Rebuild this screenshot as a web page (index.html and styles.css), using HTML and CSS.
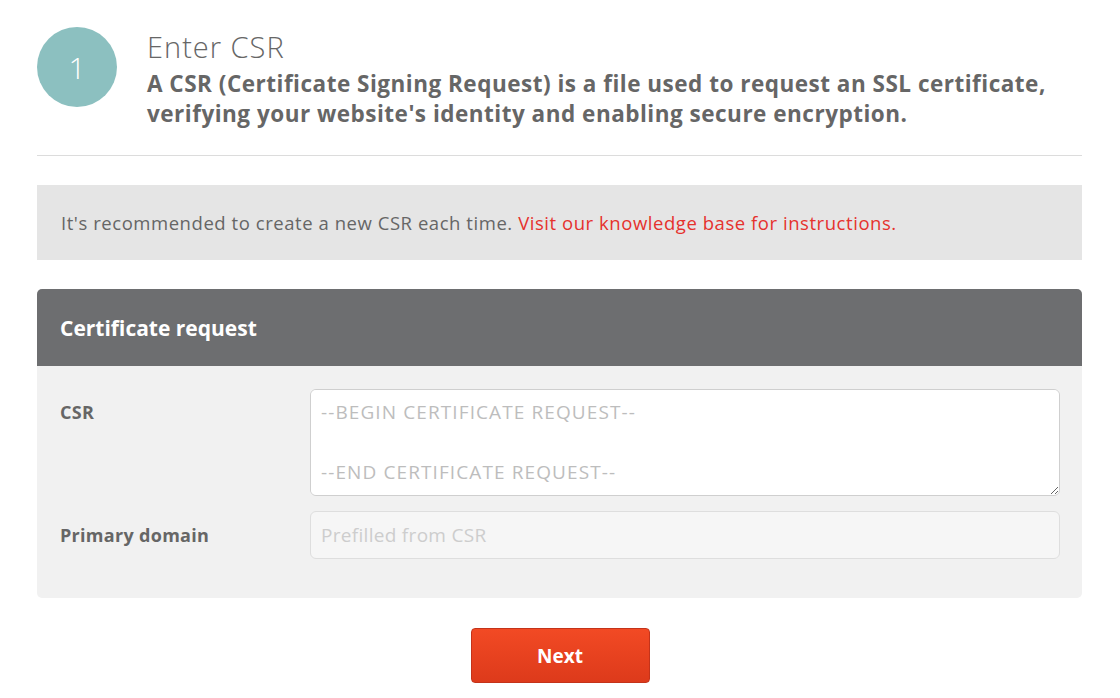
FILE: index.html
```html
<!DOCTYPE html>
<html lang="en">
<head>
<meta charset="utf-8">
<title>Enter CSR</title>
<link rel="stylesheet" href="styles.css">
</head>
<body>
<div class="page">
  <header class="step">
    <div class="step-num">1</div>
    <div class="step-text">
      <h1 class="step-title">Enter CSR</h1>
      <p class="step-desc">A CSR (Certificate Signing Request) is a file used to request an SSL certificate, verifying your website's identity and enabling secure encryption.</p>
    </div>
  </header>
  <hr class="divider">
  <div class="notice">It's recommended to create a new CSR each time. <a href="#" class="notice-link">Visit our knowledge base for instructions.</a></div>
  <section class="card">
    <div class="card-head">Certificate request</div>
    <div class="card-body">
      <div class="row">
        <label class="label label-top" for="csr">CSR</label>
        <textarea id="csr" class="textarea" placeholder="--BEGIN CERTIFICATE REQUEST--&#10;&#10;--END CERTIFICATE REQUEST--"></textarea>
      </div>
      <div class="row row-center">
        <label class="label" for="domain">Primary domain</label>
        <input id="domain" class="input" type="text" placeholder="Prefilled from CSR" disabled>
      </div>
    </div>
  </section>
  <div class="actions">
    <button class="btn" type="button">Next</button>
  </div>
</div>
</body>
</html>
```

FILE: styles.css
```css
* { box-sizing: border-box; }
html, body { margin: 0; padding: 0; background: #fff; }
body {
  font-family: "Open Sans", "Lato", sans-serif;
  color: #666;
}
.page {
  padding: 27px 38px 0 37px;
}
.step {
  display: flex;
  gap: 30px;
  align-items: flex-start;
}
.step-num {
  flex: 0 0 80px;
  width: 80px;
  height: 80px;
  border-radius: 50%;
  background: #8cc0c0;
  color: #fff;
  font-size: 30px;
  font-weight: 300;
  display: flex;
  align-items: center;
  justify-content: center;
}
.step-text { padding-top: 4px; }
.step-title {
  margin: 0;
  font-size: 29px;
  font-weight: 300;
  line-height: 32px;
  letter-spacing: 1px;
  color: #666;
}
.step-desc {
  margin: 6px 0 0;
  font-size: 22.5px;
  font-weight: 700;
  line-height: 30px;
  letter-spacing: 0.5px;
  color: #666;
}
.divider {
  border: 0;
  border-top: 1px solid #dcdcdc;
  margin: 26px 0 29px;
}
.notice {
  background: #e5e5e5;
  padding: 26px 24px;
  font-size: 18.5px;
  line-height: 23px;
  letter-spacing: 0.55px;
  color: #666;
}
.notice-link { color: #e5322d; text-decoration: none; }
.card {
  margin-top: 29px;
  border-radius: 5px;
  overflow: hidden;
  background: #f1f1f1;
}
.card-head {
  background: #6d6e70;
  color: #fff;
  font-size: 21px;
  font-weight: 700;
  height: 77px;
  display: flex;
  align-items: center;
  padding: 0 23px;
}
.card-body {
  padding: 23px 22px 39px 23px;
  display: flex;
  flex-direction: column;
  gap: 15px;
}
.row {
  display: flex;
  align-items: flex-start;
}
.row-center { align-items: center; }
.label {
  flex: 0 0 250px;
  font-size: 18px;
  font-weight: 700;
  letter-spacing: 0.3px;
  color: #666;
}
.label-top { padding-top: 11px; }
.textarea, .input {
  flex: 1;
  font-family: inherit;
  font-size: 19px;
  color: #666;
  border: 1px solid #cfcfcf;
  border-radius: 6px;
  background: #fff;
  padding: 11px 10px;
  outline: none;
}
.textarea {
  height: 107px;
  line-height: 30px;
  padding-top: 7px;
  letter-spacing: 1.1px;
  resize: vertical;
}
.input {
  height: 48px;
  background: #f6f6f6;
  border-color: #dedede;
  letter-spacing: 0.3px;
}
.textarea::placeholder { color: #bdbdbd; opacity: 1; }
.input::placeholder { color: #cdcdcd; opacity: 1; }
.actions {
  display: flex;
  justify-content: center;
  padding: 30px 0 16px;
}
.btn {
  width: 179px;
  height: 55px;
  border: 1px solid #c4331a;
  border-radius: 4px;
  background: linear-gradient(#f24a24, #dd3a1b);
  color: #fff;
  font-family: inherit;
  font-size: 19px;
  font-weight: 700;
  margin-left: 1px;
}
```
